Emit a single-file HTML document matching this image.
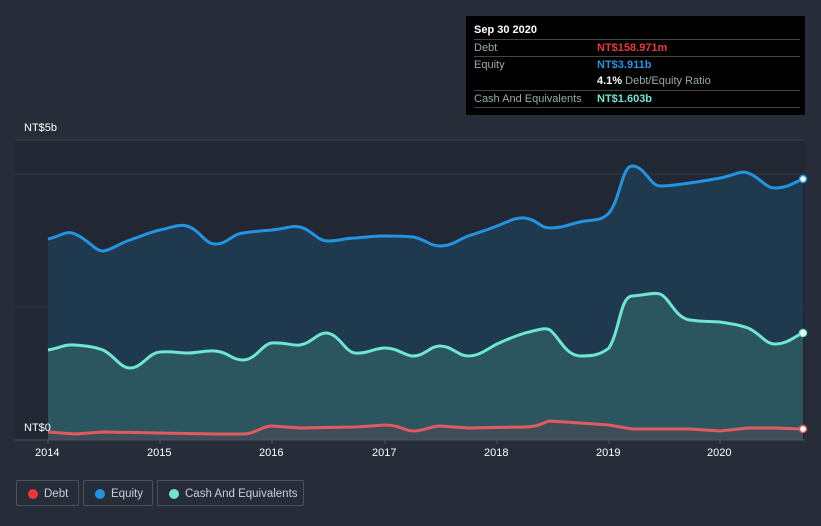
<!DOCTYPE html><html><head><style>
body{margin:0;width:821px;height:526px;background:#262d38;font-family:"Liberation Sans",sans-serif;overflow:hidden;position:relative}
.tt{position:absolute;left:466px;top:16px;width:339px;height:99px;background:#000;color:#fff;font-size:11px}
.tt .h{position:absolute;left:8px;top:8px;font-weight:bold}
.row{position:absolute;left:8px;width:326px;border-top:1px solid #444;height:16px;line-height:16px;color:#9aa;white-space:nowrap}
.row span{position:absolute;left:123px;font-weight:bold}
.lg{position:absolute;top:480px;height:26px;border:1px solid #4a5260;border-radius:2px;color:#ccd;font-size:11.5px;line-height:26px;box-sizing:border-box;padding-left:27px;white-space:nowrap}
.lg i{position:absolute;left:11px;top:8px;width:10px;height:10px;border-radius:5px}
.ax{position:absolute;color:#fff;font-size:11px}
</style></head><body>
<svg width="821" height="526" style="position:absolute;left:0;top:0">
<rect x="15" y="140" width="790" height="300" fill="#212834"/>
<line x1="15" y1="140" x2="805" y2="140" stroke="#3a4250"/>
<line x1="15" y1="174" x2="805" y2="174" stroke="#323a47"/>
<line x1="15" y1="307" x2="805" y2="307" stroke="#323a47"/>
<path d="M48,239 C61,236 66,230 75,234 C89,240 95,251 103,251 C112,250 120,243 130,240 C145,235 150,232 160,230 C173,227 180,224 187,226 C200,230 205,244 215,244 C228,244 232,234 243,233 C256,231 262,231 272,230 C285,229 292,225 300,227 C312,230 316,240 327,241 C340,241 345,238 355,238 C368,237 374,236 385,236 C398,236 405,236 413,237 C425,239 430,246 440,246 C452,246 458,240 468,236 C480,232 487,230 497,226 C508,222 515,217 525,218 C538,220 540,228 550,228 C563,228 570,224 580,222 C593,219 600,222 609,213 C620,200 622,166 632,166 C645,166 650,186 660,186 C672,186 680,184 690,183 C703,181 710,180 720,178 C733,176 740,170 748,173 C760,177 765,188 775,188 C788,188 795,182 803,179 L803,440 L48,440Z" fill="#1f3b52" opacity="0.9"/>
<path d="M48,350 C60,348 65,344 75,345 C88,346 95,347 103,350 C114,355 120,368 130,368 C142,368 148,353 160,352 C172,351 178,353 187,353 C200,353 205,350 215,351 C228,352 232,360 243,360 C256,360 262,344 272,343 C285,342 292,346 300,345 C312,343 318,332 327,333 C340,335 345,352 355,353 C368,354 374,348 385,348 C398,348 405,356 413,356 C425,356 430,346 440,346 C452,346 458,356 468,356 C480,356 487,349 497,344 C508,339 515,336 525,333 C538,330 545,327 550,330 C560,338 565,355 580,356 C593,356 600,355 609,348 C620,330 620,297 632,296 C645,295 655,292 660,294 C670,298 675,318 690,320 C703,322 710,321 720,322 C733,324 740,325 748,328 C760,333 765,344 775,344 C788,344 795,336 803,333 L803,440 L48,440Z" fill="#2e5a60" opacity="0.9"/>
<path d="M48,239 C61,236 66,230 75,234 C89,240 95,251 103,251 C112,250 120,243 130,240 C145,235 150,232 160,230 C173,227 180,224 187,226 C200,230 205,244 215,244 C228,244 232,234 243,233 C256,231 262,231 272,230 C285,229 292,225 300,227 C312,230 316,240 327,241 C340,241 345,238 355,238 C368,237 374,236 385,236 C398,236 405,236 413,237 C425,239 430,246 440,246 C452,246 458,240 468,236 C480,232 487,230 497,226 C508,222 515,217 525,218 C538,220 540,228 550,228 C563,228 570,224 580,222 C593,219 600,222 609,213 C620,200 622,166 632,166 C645,166 650,186 660,186 C672,186 680,184 690,183 C703,181 710,180 720,178 C733,176 740,170 748,173 C760,177 765,188 775,188 C788,188 795,182 803,179" fill="none" stroke="#2394e0" stroke-width="3"/>
<path d="M48,350 C60,348 65,344 75,345 C88,346 95,347 103,350 C114,355 120,368 130,368 C142,368 148,353 160,352 C172,351 178,353 187,353 C200,353 205,350 215,351 C228,352 232,360 243,360 C256,360 262,344 272,343 C285,342 292,346 300,345 C312,343 318,332 327,333 C340,335 345,352 355,353 C368,354 374,348 385,348 C398,348 405,356 413,356 C425,356 430,346 440,346 C452,346 458,356 468,356 C480,356 487,349 497,344 C508,339 515,336 525,333 C538,330 545,327 550,330 C560,338 565,355 580,356 C593,356 600,355 609,348 C620,330 620,297 632,296 C645,295 655,292 660,294 C670,298 675,318 690,320 C703,322 710,321 720,322 C733,324 740,325 748,328 C760,333 765,344 775,344 C788,344 795,336 803,333" fill="none" stroke="#6ee6d2" stroke-width="3"/>
<path d="M48,432 L75,434 L103,432 L160,433 L215,434 L243,434 C255,434 262,426 272,426 L300,428 L355,427 L385,425 C400,425 405,431 413,431 C425,431 430,426 440,426 L468,428 L525,427 C540,427 545,421 550,421 L580,423 L609,425 L632,429 L690,429 L720,431 L748,428 L775,428 L803,429 L803,440 L48,440Z" fill="#4a4a55" opacity="0.6"/>
<path d="M48,432 L75,434 L103,432 L160,433 L215,434 L243,434 C255,434 262,426 272,426 L300,428 L355,427 L385,425 C400,425 405,431 413,431 C425,431 430,426 440,426 L468,428 L525,427 C540,427 545,421 550,421 L580,423 L609,425 L632,429 L690,429 L720,431 L748,428 L775,428 L803,429" fill="none" stroke="#e05a5f" stroke-width="3"/>
<line x1="15" y1="440" x2="805" y2="440" stroke="#4a5260"/>
<g stroke="#4a5260"><line x1="48" y1="440" x2="48" y2="444"/><line x1="160" y1="440" x2="160" y2="444"/><line x1="272" y1="440" x2="272" y2="444"/><line x1="385" y1="440" x2="385" y2="444"/><line x1="497" y1="440" x2="497" y2="444"/><line x1="609" y1="440" x2="609" y2="444"/><line x1="720" y1="440" x2="720" y2="444"/></g>
<circle cx="803" cy="179" r="3.5" fill="#fff" stroke="#2394e0" stroke-width="1.5"/>
<circle cx="803" cy="333" r="3.5" fill="#fff" stroke="#6ee6d2" stroke-width="1.5"/>
<circle cx="803" cy="429" r="3.5" fill="#fff" stroke="#e05a5f" stroke-width="1.5"/>
</svg>
<div class="ax" style="left:24px;top:122px">NT$5b</div>
<div class="ax" style="left:24px;top:422px">NT$0</div>
<div class="ax" style="left:35px;top:447px">2014</div>
<div class="ax" style="left:147px;top:447px">2015</div>
<div class="ax" style="left:259px;top:447px">2016</div>
<div class="ax" style="left:372px;top:447px">2017</div>
<div class="ax" style="left:484px;top:447px">2018</div>
<div class="ax" style="left:596px;top:447px">2019</div>
<div class="ax" style="left:707px;top:447px">2020</div>
<div class="tt"><div class="h">Sep 30 2020</div>
<div class="row" style="top:23px">Debt<span style="color:#e8383d">NT$158.971m</span></div>
<div class="row" style="top:40px">Equity<span style="color:#2394e0">NT$3.911b</span></div>
<div class="row" style="top:57px;border-top:none"><span style="color:#fff">4.1% <b style="font-weight:normal;color:#9aa">Debt/Equity Ratio</b></span></div>
<div class="row" style="top:74px">Cash And Equivalents<span style="color:#6ee6d2">NT$1.603b</span></div>
<div class="row" style="top:91px;height:0"></div>
</div>
<div class="lg" style="left:16px;width:63px"><i style="background:#e8383d"></i>Debt</div>
<div class="lg" style="left:83px;width:70px"><i style="background:#2394e0"></i>Equity</div>
<div class="lg" style="left:157px;width:147px"><i style="background:#6ee6d2"></i>Cash And Equivalents</div>
</body></html>
